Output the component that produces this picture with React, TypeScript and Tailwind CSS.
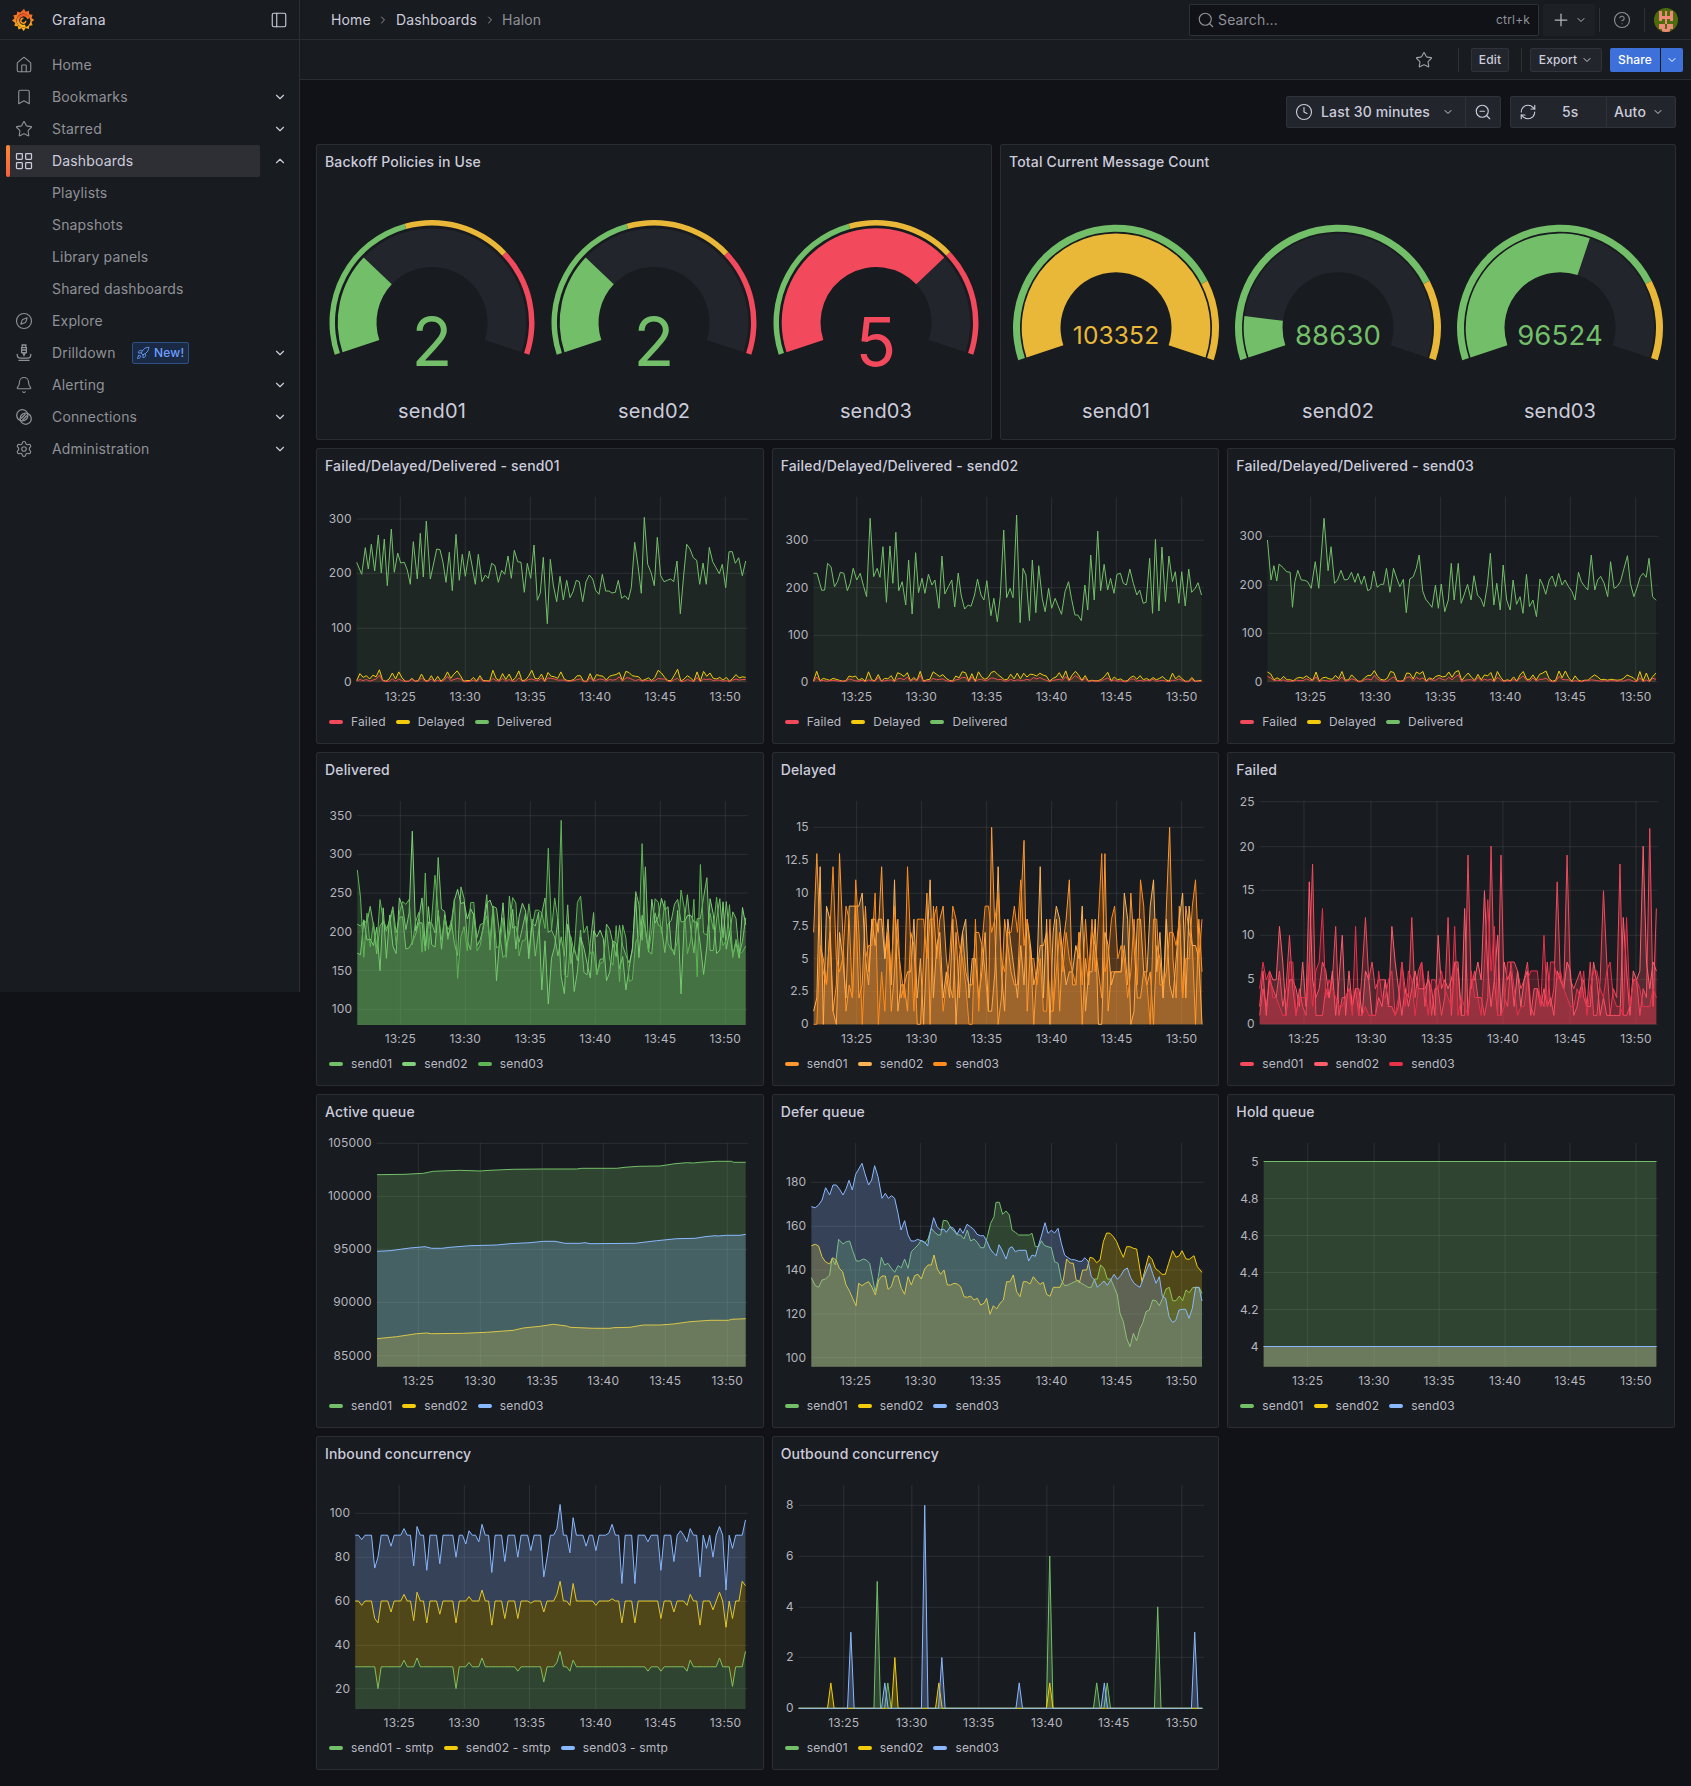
import {
  Bell,
  Bookmark,
  ChevronDown,
  ChevronRight,
  ChevronUp,
  CircleHelp,
  Clock,
  Compass,
  Home,
  LayoutGrid,
  PanelLeft,
  Plus,
  RefreshCw,
  Rocket,
  Search,
  Settings,
  Star,
  ZoomOut,
} from "lucide-react";
import type { ReactNode } from "react";

type Pt = [number, number];
type Series = { color: string; pts: Pt[]; base?: Pt[] };

const GREEN = "#73bf69";
const YELLOW = "#f2cc0c";
const RED = "#f2495c";
const BLUE = "#8ab8ff";

const rng = (start: number) => {
  let seed = start;
  return () => {
    seed = (seed + 0x6d2b79f5) | 0;
    let t = Math.imul(seed ^ (seed >>> 15), 1 | seed);
    t = (t + Math.imul(t ^ (t >>> 7), 61 | t)) ^ t;
    return ((t ^ (t >>> 14)) >>> 0) / 4294967296;
  };
};

// traced from crops of the panels: x,y pairs in crop pixels
const trace = (raw: number[], ox: number, oy: number, sx = 3, sy = 3): Pt[] => {
  const pts: Pt[] = [];
  for (let i = 0; i < raw.length; i += 2) pts.push([ox + raw[i] / sx, oy + raw[i + 1] / sy]);
  return pts;
};

const linear = (v0: number, y0: number, v1: number, y1: number) => (v: number) =>
  y0 + ((v - v0) / (v1 - v0)) * (y1 - y0);

const even = (values: number[], left: number, right: number, y: (v: number) => number): Pt[] =>
  values.map((v, i) => [left + ((right - left) * i) / (values.length - 1), y(v)]);

const noisy = (
  seed: number,
  gen: (r: () => number, i: number) => number,
  peaks: number[][],
  x0: number,
  step: number
) => {
  const r = rng(seed);
  const values = Array.from({ length: 121 }, (_, i) => gen(r, i));
  peaks.forEach(([x, v]) => {
    values[Math.min(120, Math.round((x - x0) / step))] = v;
  });
  return values;
};

const withOverrides = (base: number, overrides: number[][]) => {
  const values = Array.from({ length: 121 }, () => base);
  overrides.forEach(([i, v]) => {
    values[i] = v;
  });
  return values;
};

const XT1 = [400.3, 465.3, 530.3, 595.3, 660.3, 725.3];
const XT2 = [856.3, 921.3, 986.3, 1051.3, 1116.3, 1181.3];

const fddSmall = (seed: number, left: number, right: number, y: (v: number) => number): Series[] => {
  const r = rng(seed);
  const delayed = Array.from({ length: 121 }, () => Math.round(1 + Math.pow(r(), 1.8) * 22));
  const failed = delayed.map((v) => Math.round(v * (0.15 + r() * 0.45)));
  return [
    { color: YELLOW, pts: even(delayed, left, right, y) },
    { color: RED, pts: even(failed, left, right, y) },
  ];
};

const send01Delivered = trace(
  [140,352,155,388,166,308,175,372,184,298,194,378,205,270,214,384,223,282,232,422,244,252,253,382,263,324,272,354,283,352,292,375,301,418,310,290,322,402,331,265,340,396,349,228,361,402,370,360,380,312,390,314,399,352,408,412,418,322,427,437,438,268,448,406,457,328,466,394,478,318,487,366,496,418,505,328,516,410,526,390,535,400,545,355,555,362,565,412,575,376,584,388,594,333,604,400,613,316,623,350,633,352,643,442,652,355,662,400,672,300,682,466,691,444,700,337,712,536,721,343,730,420,740,470,750,394,760,465,770,406,780,458,789,440,799,406,808,410,818,470,828,410,838,390,848,402,857,436,867,448,877,388,887,438,897,438,906,444,916,442,925,406,935,460,945,452,955,464,964,428,974,292,984,362,994,445,1003,217,1013,358,1023,382,1033,422,1042,277,1052,392,1062,410,1072,406,1082,402,1091,410,1101,348,1111,506,1121,390,1130,298,1140,312,1150,338,1160,346,1169,418,1179,354,1189,418,1198,307,1208,350,1218,368,1228,386,1237,358,1247,428,1257,320,1267,320,1276,355,1286,338,1297,392,1307,348],
  310,
  445
);

const send02Delivered = trace(
  [74,385,80,385,88,436,93,435,98,355,104,365,110,425,115,410,120,382,126,385,132,437,137,415,142,370,148,405,154,385,160,425,165,455,171,220,177,395,183,370,188,397,193,305,199,472,205,303,210,415,215,262,220,437,226,410,232,480,237,345,243,507,249,323,254,443,260,400,265,445,271,388,277,420,282,405,289,490,294,333,299,447,305,425,311,405,316,486,322,384,327,450,333,492,339,480,344,484,350,450,355,402,361,450,366,465,371,407,378,512,383,460,389,530,394,455,400,255,405,458,411,430,416,458,422,210,428,533,433,370,438,390,444,527,449,345,455,503,460,362,466,460,471,500,477,430,482,490,488,460,493,482,499,508,505,440,511,410,516,460,522,510,527,510,533,527,539,420,544,495,549,330,555,465,561,258,566,437,572,358,578,435,583,400,589,445,594,388,600,385,605,415,610,420,616,372,622,415,628,450,633,435,639,475,644,472,650,340,655,505,660,283,666,498,671,306,677,470,683,333,689,410,694,380,700,475,705,380,711,483,717,372,722,442,728,430,733,413,739,450],
  770,
  445,
  1.7137
);

const send03Delivered = trace(
  [853,285,859,405,864,362,869,408,873,357,880,368,886,380,892,382,896,487,900,410,905,376,911,405,917,406,922,410,928,430,935,350,941,430,950,220,957,377,962,305,968,415,973,405,979,376,985,405,991,403,997,382,1003,412,1008,385,1014,418,1019,393,1025,437,1030,432,1035,378,1041,427,1047,418,1052,418,1057,370,1063,442,1069,370,1075,402,1080,425,1086,403,1091,503,1097,402,1103,395,1108,370,1113,330,1119,437,1124,462,1130,475,1135,487,1141,420,1146,490,1151,417,1157,500,1163,465,1168,355,1173,465,1180,355,1185,475,1190,450,1196,418,1202,465,1207,392,1213,450,1219,462,1224,485,1230,420,1235,325,1241,480,1246,415,1252,495,1257,360,1263,465,1269,495,1274,405,1280,478,1286,455,1291,505,1297,388,1302,485,1308,465,1314,515,1320,402,1325,420,1330,448,1336,405,1341,393,1347,425,1352,385,1358,420,1363,405,1369,425,1375,440,1380,465,1386,382,1391,410,1397,425,1402,435,1408,330,1414,435,1419,405,1424,394,1430,415,1436,455,1441,350,1447,430,1452,425,1458,410,1464,370,1470,332,1475,415,1481,455,1486,430,1492,395,1497,385,1502,397,1507,340,1513,455,1519,466],
  770,
  445,
  1.7137
);

const deferBlue = trace(
  [123,335,135,338,145,330,155,315,166,278,178,300,188,270,198,270,208,283,218,300,228,280,236,256,246,285,256,238,275,205,285,240,295,270,304,255,313,212,323,245,335,310,345,295,354,310,364,302,373,310,383,355,392,405,403,377,413,420,422,438,432,438,442,433,452,437,462,440,472,453,480,410,490,368,500,395,510,405,520,402,528,412,540,395,550,400,560,418,569,400,578,415,590,388,600,395,610,403,620,418,630,422,640,422,650,440,660,462,670,475,678,482,686,449,695,465,707,492,717,460,725,455,735,470,745,466,755,466,767,466,775,498,785,480,795,484,805,450,814,420,824,383,833,415,843,406,853,414,863,400,873,445,883,480,893,488,903,494,913,494,925,499,935,499,943,488,953,498,963,545,973,555,981,577,991,567,1001,558,1011,571,1021,555,1031,538,1041,553,1051,542,1061,525,1071,519,1081,548,1091,565,1101,572,1109,577,1119,550,1129,525,1137,505,1147,535,1157,565,1167,545,1176,604,1186,610,1196,665,1206,682,1216,677,1226,645,1236,643,1246,643,1256,670,1266,640,1276,577,1286,577,1295,618],
  770,
  1095
);

const deferGreen = trace(
  [123,548,135,572,145,577,155,555,166,552,178,540,185,490,195,510,205,433,218,447,228,440,238,438,248,470,258,498,268,498,278,492,288,495,298,505,306,545,314,590,324,545,333,487,343,510,353,505,363,520,373,532,383,512,393,518,403,492,413,520,423,470,433,460,443,450,453,435,463,445,473,432,483,400,493,412,503,420,511,420,519,376,531,378,541,398,551,408,561,420,571,420,581,432,591,405,601,438,611,432,621,442,631,458,641,458,651,425,661,385,671,365,677,322,687,322,697,358,707,348,717,360,725,405,735,412,745,420,755,420,767,420,777,420,785,415,795,455,805,455,813,437,823,452,833,455,843,458,853,500,863,505,873,555,883,572,893,570,903,565,913,560,923,555,933,565,943,570,953,577,963,577,973,552,981,552,991,510,1001,520,1011,552,1021,552,1031,575,1041,600,1049,655,1059,680,1069,730,1079,755,1089,715,1099,737,1109,700,1117,685,1127,650,1137,645,1147,615,1157,617,1167,632,1177,610,1187,582,1197,577,1207,617,1217,617,1227,603,1237,617,1247,585,1257,593,1267,578,1277,577,1287,578,1295,595],
  770,
  1095
);

const deferYellow = trace(
  [123,452,135,448,145,453,155,485,165,500,178,507,187,488,197,495,207,520,217,530,227,570,237,587,247,610,257,632,265,565,275,572,285,565,295,560,305,577,315,600,325,555,335,543,345,543,353,583,363,575,373,543,383,543,393,580,403,598,413,545,423,570,433,542,443,538,453,552,463,522,473,510,483,510,491,480,501,522,511,538,521,525,531,570,541,570,551,565,561,567,571,575,581,605,591,607,601,603,611,615,621,610,631,630,641,625,649,610,659,658,669,632,679,642,689,625,699,615,709,560,719,560,729,540,739,590,749,605,759,560,769,560,779,567,789,545,799,558,809,568,819,562,829,598,839,604,849,577,859,577,869,577,879,555,889,492,899,504,909,505,917,553,927,563,937,525,949,525,959,487,969,490,979,503,989,495,999,440,1009,414,1019,415,1029,425,1039,440,1049,465,1059,487,1069,455,1079,455,1089,460,1099,462,1115,560,1125,520,1135,482,1145,493,1155,520,1165,528,1175,538,1185,538,1195,505,1207,467,1217,487,1227,482,1235,467,1247,492,1257,493,1271,482,1281,515,1295,532],
  770,
  1095
);

const activeGreen = trace(
  [201,254,285,253,340,250,370,244,450,241,510,243,540,241,610,238,700,237,800,237,815,235,920,235,945,232,985,229,1050,228,1095,221,1130,218,1150,219,1170,217,1220,214,1265,214,1270,217,1307,217],
  310,
  1090
);
const activeBlue = trace(
  [201,484,240,482,300,474,345,470,365,475,395,475,420,472,480,467,560,465,600,461,660,458,700,454,735,454,765,460,810,460,825,458,840,461,975,460,1040,452,1100,446,1155,445,1185,440,1215,437,1225,438,1250,436,1290,436,1307,433],
  310,
  1090
);
const activeYellow = trace(
  [201,746,260,740,320,731,350,729,365,731,460,730,530,727,610,721,640,714,690,709,730,703,770,708,780,712,850,715,900,715,910,713,960,712,1000,705,1050,705,1090,702,1140,695,1200,691,1255,691,1265,688,1307,686],
  310,
  1090
);

const inboundY = linear(100, 1513.3, 20, 1688.7);
const inboundBlue = even(
  withOverrides(90, [[2,88],[6,75],[7,80],[11,85],[15,93],[18,76],[19,94],[22,74],[26,77],[31,80],[34,86],[35,92],[38,87],[39,95],[42,73],[46,78],[50,80],[54,83],[58,71],[59,80],[62,93],[63,104],[66,82],[67,98],[71,85],[74,83],[78,91],[79,95],[82,68],[86,68],[90,87],[94,74],[98,78],[100,92],[102,87],[103,93],[106,71],[108,84],[110,80],[112,94],[114,65],[116,84],[119,90],[120,97]]),
  355.2,
  745.5,
  inboundY
);
const inboundYellow = even(
  withOverrides(60, [[2,58],[6,52],[7,50],[11,55],[15,63],[18,51],[19,64],[22,50],[26,54],[31,50],[35,62],[39,65],[42,49],[46,52],[50,52],[54,59],[58,55],[62,63],[63,69],[66,58],[67,68],[74,58],[79,61],[82,50],[86,50],[94,52],[98,55],[102,58],[103,63],[106,49],[110,56],[112,64],[114,48],[116,52],[119,69],[120,67]]),
  355.2,
  745.5,
  inboundY
);
const inboundGreen = even(
  withOverrides(30, [[7,20],[15,33],[19,34],[31,20],[35,32],[39,34],[50,28],[58,23],[62,32],[63,37],[66,28],[67,33],[90,28],[92,30],[94,28],[102,28],[103,33],[112,34],[116,21],[120,37]]),
  355.2,
  745.5,
  inboundY
);

const outY = linear(8, 1505.3, 0, 1708.3);
const spikes = (list: number[][]): Pt[] => {
  const pts: Pt[] = [[798.3, outY(0)]];
  list.forEach(([zx, v]) => {
    const x = 310 + zx / 1.704;
    pts.push([x - 3.3, outY(0)], [x, outY(v)], [x + 3.3, outY(0)]);
  });
  pts.push([1202, outY(0)]);
  return pts;
};

const deliveredY = linear(350, 815.7, 100, 1009.3);
const deliveredBase = (r: () => number, i: number) => {
  const dip = i > 62 && i < 86 ? 30 : 0;
  return 205 - dip + (r() - 0.5) * 80;
};
const delayedY = linear(15, 827.3, 0, 1024.3);
const delayedBase = (r: () => number) => (r() < 0.08 ? 0 : Math.round(1 + Math.pow(r(), 1.05) * 8));
const failedY = linear(25, 801.7, 0, 1024.3);
const failedBase = (r: () => number) => Math.round(0.5 + Math.pow(r(), 1.2) * 7);

type ChartProps = {
  title: string;
  ox: number;
  oy: number;
  tall?: boolean;
  left: number;
  right: number;
  top: number;
  bottom: number;
  labelY: number;
  yTicks: [string, number][];
  xTicks: number[];
  series: Series[];
  legend: [string, string][];
  fill?: number;
};

const Panel = ({ title, children }: { title: string; children: ReactNode }) => (
  <div className="flex h-full flex-col rounded-[2px] border border-[#2a2d33] bg-[#181b1f]">
    <div className="mb-[2px] flex h-[34px] items-center px-2 text-sm font-medium text-[#ccccdc]">
      {title}
    </div>
    {children}
  </div>
);

const Chart = ({
  title,
  ox,
  oy,
  tall,
  left,
  right,
  top,
  bottom,
  labelY,
  yTicks,
  xTicks,
  series,
  legend,
  fill = 0.25,
}: ChartProps) => {
  const h = tall ? 262 : 224;
  return (
    <Panel title={title}>
      <svg
        className="block shrink-0"
        width={445}
        height={h}
        viewBox={`${ox + 1} ${oy + 37} 445 ${h}`}
      >
        {yTicks.map(([, y]) => (
          <line key={y} x1={left} x2={right} y1={y} y2={y} stroke="#fff" strokeOpacity={0.09} />
        ))}
        {xTicks.map((x) => (
          <line key={x} x1={x} x2={x} y1={top} y2={bottom} stroke="#fff" strokeOpacity={0.09} />
        ))}
        {series.map((s, i) => {
          const fmt = (p: Pt) => `${p[0].toFixed(1)},${p[1].toFixed(1)}`;
          const line = s.pts.map(fmt).join(" ");
          const first = s.pts[0][0].toFixed(1);
          const last = s.pts[s.pts.length - 1][0].toFixed(1);
          const floor = s.base
            ? [...s.base].reverse().map(fmt).join(" ")
            : `${last},${bottom} ${first},${bottom}`;
          return (
            <g key={i}>
              <polygon points={`${line} ${floor}`} fill={s.color} fillOpacity={fill} />
              <polyline points={line} fill="none" stroke={s.color} strokeWidth={1} />
            </g>
          );
        })}
        {yTicks.map(([label, y]) => (
          <text key={label} x={left - 5} y={y + 4} textAnchor="end" fontSize={12} fill="#b4b5be">
            {label}
          </text>
        ))}
        {["13:25", "13:30", "13:35", "13:40", "13:45", "13:50"].map((label, i) => (
          <text key={label} x={xTicks[i]} y={labelY} textAnchor="middle" fontSize={12} fill="#b4b5be">
            {label}
          </text>
        ))}
      </svg>
      <div className="mt-[2px] flex h-[22px] items-center gap-[10px] pl-3 text-xs text-[#b9bac3]">
        {legend.map(([name, color]) => (
          <div key={name} className="flex items-center gap-2">
            <span className="h-1 w-[14px] rounded-full" style={{ backgroundColor: color }} />
            {name}
          </div>
        ))}
      </div>
    </Panel>
  );
};

const polar = (cx: number, cy: number, r: number, deg: number): string => {
  const a = (deg * Math.PI) / 180;
  return `${(cx + r * Math.cos(a)).toFixed(2)} ${(cy - r * Math.sin(a)).toFixed(2)}`;
};

const START = 198.4;
const SWEEP = 216.8;

const sector = (cy: number, r0: number, r1: number, f0: number, f1: number) => {
  const a0 = START - SWEEP * f0;
  const a1 = START - SWEEP * f1;
  const large = a0 - a1 > 180 ? 1 : 0;
  return `M${polar(111, cy, r1, a0)} A${r1} ${r1} 0 ${large} 1 ${polar(111, cy, r1, a1)} L${polar(111, cy, r0, a1)} A${r0} ${r0} 0 ${large} 0 ${polar(111, cy, r0, a0)} Z`;
};

type GaugeProps = {
  label: string;
  value: string;
  fraction: number;
  color: string;
  cy: number;
  ring: [number, number];
  steps: [number, number, string][];
  fontSize: number;
  valueY: number;
};

const Gauge = ({ label, value, fraction, color, cy, ring, steps, fontSize, valueY }: GaugeProps) => (
  <svg className="block" width={222} height={255} viewBox="0 0 222 255">
    {steps.map(([a, b, c]) => (
      <path key={c} d={sector(cy, ring[0], ring[1], a, b)} fill={c} />
    ))}
    <path d={sector(cy, 55.5, 94.3, 0, 1)} fill="#22252b" />
    <path d={sector(cy, 55.5, 94.3, 0, fraction)} fill={color} />
    <text x={111} y={valueY} textAnchor="middle" fontSize={fontSize} fill={color}>
      {value}
    </text>
    <text x={111} y={237} textAnchor="middle" fontSize={20} fill="#ccccdc">
      {label}
    </text>
  </svg>
);

const policySteps: [number, number, string][] = [
  [0, 3 / 7, GREEN],
  [3 / 7, 5 / 7, "#eab839"],
  [5 / 7, 1, RED],
];
const countSteps: [number, number, string][] = [
  [0, 0.79, GREEN],
  [0.79, 1, "#eab839"],
];

const Logo = () => (
  <svg width={24} height={24} viewBox="0 0 24 24">
    <defs>
      <linearGradient id="logo" x1="0" y1="1" x2="0" y2="0">
        <stop offset="0" stopColor="#fcb91f" />
        <stop offset="1" stopColor="#f0572a" />
      </linearGradient>
    </defs>
    <path
      d="M13 .8l1.7 3 3.2-1 .3 3.4 3.4.6-1.1 3.2 2.7 2-2.6 2.1 1 3.2-3.3.5-.5 3.3-3.2-1-1.9 2.8-2.2-2.6-3.1 1.3-.6-3.3-3.4-.2.9-3.2L1 12.6l2.5-2.2-1.1-3.2 3.3-.4.5-3.3 3.1 1.1z"
      fill="url(#logo)"
    />
    <circle cx="12.4" cy="12.6" r="7" fill="#181b1f" />
    <path
      d="M17.6 10.6a5.5 5.5 0 1 0-3.2 7.1"
      fill="none"
      stroke="url(#logo)"
      strokeWidth="2.6"
    />
    <path d="M14.8 12.8a2.5 2.5 0 1 1-2.4-2.6" fill="none" stroke="#fb9a22" strokeWidth="1.4" />
  </svg>
);

const DrilldownIcon = () => (
  <svg width={16} height={18} viewBox="0 0 16 18" fill="none" stroke="currentColor" strokeWidth="1.3">
    <path d="M6.2 1h3.6v2.6H6.2zM5.6 3.6h4.8v5H5.6zM5.6 6h4.8M6.6 8.6L8 11.4l1.4-2.8" />
    <path d="M1.2 10.5c0 2.4 1 3.6 3.2 3.6h7.2c2.2 0 3.2-1.2 3.2-3.6M3 16.4h10" strokeLinecap="round" />
  </svg>
);

const ConnectionsIcon = () => (
  <svg width={16} height={16} viewBox="0 0 16 16" fill="none" stroke="currentColor" strokeWidth="1.3">
    <circle cx="6.3" cy="6.3" r="5.6" />
    <circle cx="9.7" cy="9.7" r="5.6" />
    <path d="M5 9.5L9.5 5M6.5 11L11 6.5" />
  </svg>
);

const Avatar = () => {
  const rows = [
    "..XX.XX..",
    ".XOXOXOX.",
    "XXOXOXOXX",
    "XXOOOOOXX",
    "XXOXOXOXX",
    "XXXXOXXXX",
    "XXOOXOOXX",
    ".XOOXOOX.",
    "..XOOOX..",
  ];
  return (
    <svg width={24} height={24} viewBox="0 0 9 9" shapeRendering="crispEdges" className="rounded-full">
      <rect width="9" height="9" fill="#4f6c0c" />
      {rows.flatMap((row, y) =>
        row
          .split("")
          .map((c, x) =>
            c === "O" ? <rect key={`${x}-${y}`} x={x} y={y} width="1" height="1" fill="#ee8a78" /> : null
          )
      )}
    </svg>
  );
};

const NavRow = ({
  icon,
  label,
  chevron,
  active,
  badge,
}: {
  icon?: ReactNode;
  label: string;
  chevron?: boolean;
  active?: boolean;
  badge?: boolean;
}) => (
  <div className="flex h-8 items-center pl-[6px]">
    <div
      className={
        active
          ? "relative flex h-8 w-[254px] items-center rounded-[2px] bg-[#2d2f34] text-[#ccccdc]"
          : "relative flex h-8 w-[254px] items-center text-[#8f9198]"
      }
    >
      {active && (
        <span className="absolute inset-y-0 left-0 w-1 rounded-[2px] bg-linear-to-b from-[#ff8833] to-[#f55f3e]" />
      )}
      <span className="mr-[10px] flex w-[36px] justify-center">{icon}</span>
      <span className="text-sm">{label}</span>
      {badge && (
        <span className="ml-[16px] flex h-[22px] w-[57px] items-center justify-center gap-1 rounded-[2px] border border-[#2f5286] bg-[#1a2a44] text-xs font-medium text-[#6e9fff]">
          <Rocket size={14} strokeWidth={1.5} />
          New!
        </span>
      )}
    </div>
    {chevron && (
      <span className="ml-[13px] text-[#ccccdc]">
        {active ? <ChevronUp size={14} /> : <ChevronDown size={14} />}
      </span>
    )}
  </div>
);

const Sidebar = () => (
  <aside className="h-[992px] w-[300px] shrink-0 border-r border-[#2a2d33] bg-[#181b1f]">
    <div className="flex h-10 items-center border-b border-[#2a2d33] pr-[11px] pl-[11px]">
      <Logo />
      <span className="ml-[17px] text-sm text-[#ccccdc]">Grafana</span>
      <PanelLeft size={18} strokeWidth={1.5} className="ml-auto text-[#ccccdc]" />
    </div>
    <nav className="pt-[9px]">
      <NavRow icon={<Home size={18} strokeWidth={1.5} />} label="Home" />
      <NavRow icon={<Bookmark size={18} strokeWidth={1.5} />} label="Bookmarks" chevron />
      <NavRow icon={<Star size={18} strokeWidth={1.5} />} label="Starred" chevron />
      <NavRow icon={<LayoutGrid size={20} strokeWidth={1.5} />} label="Dashboards" chevron active />
      <NavRow label="Playlists" />
      <NavRow label="Snapshots" />
      <NavRow label="Library panels" />
      <NavRow label="Shared dashboards" />
      <NavRow icon={<Compass size={18} strokeWidth={1.5} />} label="Explore" />
      <NavRow icon={<DrilldownIcon />} label="Drilldown" chevron badge />
      <NavRow icon={<Bell size={18} strokeWidth={1.5} />} label="Alerting" chevron />
      <NavRow icon={<ConnectionsIcon />} label="Connections" chevron />
      <NavRow icon={<Settings size={18} strokeWidth={1.5} />} label="Administration" chevron />
    </nav>
  </aside>
);

const TopBar = () => (
  <header className="flex h-10 items-center border-b border-[#2a2d33] bg-[#181b1f] pr-[13px] pl-[31px] text-sm">
    <span className="text-[#ccccdc]">Home</span>
    <ChevronRight size={12} className="mx-[6.5px] text-[#8f9198]" />
    <span className="text-[#ccccdc]">Dashboards</span>
    <ChevronRight size={12} className="mx-[6.5px] text-[#8f9198]" />
    <span className="text-[#8f9198]">Halon</span>
    <div className="ml-auto flex h-[32px] w-[350px] items-center rounded-[2px] border border-[#2f3238] bg-[#111217] pr-2 pl-[7px] text-[#8f9198]">
      <Search size={18} strokeWidth={1.5} />
      <span className="ml-[3px]">Search...</span>
      <span className="ml-auto text-xs">ctrl+k</span>
    </div>
    <div className="ml-1 flex h-[32px] w-[52px] items-center justify-center gap-1 rounded-[2px] bg-[#1d2025] text-[#b4b5be]">
      <Plus size={20} strokeWidth={1.5} />
      <ChevronDown size={12} />
    </div>
    <span className="ml-1 h-6 w-px bg-[#2f3238]" />
    <CircleHelp size={18} strokeWidth={1.5} className="mx-[13px] text-[#8f9198]" />
    <span className="h-6 w-px bg-[#2f3238]" />
    <span className="ml-[9px] flex">
      <Avatar />
    </span>
  </header>
);

const toolBtn =
  "flex h-6 items-center justify-center rounded-[2px] border border-[#2f3238] bg-[#22252b] text-xs font-medium text-[#ccccdc]";

const ToolBar = () => (
  <div className="flex h-10 items-center justify-end border-b border-[#2a2d33] bg-[#181b1f] pr-2">
    <Star size={18} strokeWidth={1.5} className="text-[#a0a1a9]" />
    <span className="mr-3 ml-[25px] h-6 w-px bg-[#2f3238]" />
    <div className={`${toolBtn} w-[38px]`}>Edit</div>
    <span className="mr-2 ml-3 h-6 w-px bg-[#2f3238]" />
    <div className={`${toolBtn} w-[72px] gap-1`}>
      Export
      <ChevronDown size={12} />
    </div>
    <div className="ml-2 flex h-6 w-[50px] items-center justify-center rounded-l-[2px] bg-[#3d71d9] text-xs font-medium text-white">
      Share
    </div>
    <div className="ml-px flex h-6 w-[22px] items-center justify-center rounded-r-[2px] bg-[#3d71d9] text-white">
      <ChevronDown size={12} />
    </div>
  </div>
);

const timeBtn =
  "flex h-8 items-center border border-[#2f3238] bg-[#22252b] text-sm font-medium text-[#ccccdc]";

const TimeControls = () => (
  <div className="mb-4 flex h-8 justify-end">
    <div className={`${timeBtn} w-[180px] rounded-l-[2px] pl-[8px]`}>
      <Clock size={18} strokeWidth={1.5} />
      <span className="ml-[8px]">Last 30 minutes</span>
      <ChevronDown size={12} className="mr-[11px] ml-auto" />
    </div>
    <div className={`${timeBtn} -ml-px w-[36px] justify-center rounded-r-[2px]`}>
      <ZoomOut size={18} strokeWidth={1.5} />
    </div>
    <div className={`${timeBtn} ml-[9px] w-[97px] rounded-l-[2px] pl-[8px]`}>
      <RefreshCw size={18} strokeWidth={1.5} />
      <span className="ml-[25px]">5s</span>
    </div>
    <div className={`${timeBtn} -ml-px w-[70px] justify-center gap-[6px] rounded-r-[2px] pr-1`}>
      Auto
      <ChevronDown size={12} />
    </div>
  </div>
);

const fddLegend: [string, string][] = [
  ["Failed", RED],
  ["Delayed", YELLOW],
  ["Delivered", GREEN],
];
const hostLegend: [string, string][] = [
  ["send01", GREEN],
  ["send02", YELLOW],
  ["send03", BLUE],
];

const App = () => {
  const y1 = linear(300, 519, 0, 681.7);
  const y2 = linear(300, 540.3, 0, 681.7);
  const y3 = linear(300, 536.3, 0, 681.7);

  const delivered = [
    noisy(11, deliveredBase, [[142,210],[243,216],[331,212],[388,296],[448,258],[526,248],[594,246],[691,224],[770,235],[847,225],[974,252],[1003,284],[1130,248],[1189,270]], 142, 9.7),
    noisy(23, deliveredBase, [[214,150],[310,330],[438,255],[557,137],[691,125],[712,107],[760,120],[790,123],[946,125],[1111,120],[1180,145]], 142, 9.7),
    noisy(37, deliveredBase, [[142,280],[349,276],[370,273],[439,140],[672,228],[712,308],[751,344],[799,238],[808,246],[915,208],[994,314],[1042,238],[1111,254],[1149,242],[1167,287],[1218,245],[1160,142]], 142, 9.7),
  ];
  const delayed = [
    noisy(5, delayedBase, [[142,13],[211,13],[337,12],[466,10],[661,15],[766,14],[895,11],[1000,13],[1078,10],[1195,15],[1295,4]], 130, 9.71),
    noisy(6, delayedBase, [[154,12],[271,10],[376,11],[484,11],[688,12],[805,12],[1060,10],[1147,11],[1234,10]], 130, 9.71),
    noisy(7, delayedBase, [[193,12],[259,11],[319,10],[415,12],[679,10],[748,11],[991,13],[1108,11],[1273,11]], 130, 9.71),
  ];
  const failed = [
    noisy(8, failedBase, [[190,10],[268,18],[337,11],[418,12],[556,12],[667,12],[727,19],[796,20],[826,19],[994,16],[1024,19],[1135,15],[1183,18],[1273,22],[1294,13]], 105, 9.9),
    noisy(9, failedBase, [[169,11],[250,16],[357,10],[499,11],[637,10],[718,13],[775,15],[817,10],[1195,12],[1255,20]], 105, 9.9),
    noisy(10, failedBase, [[289,13],[388,11],[688,11],[787,14],[805,11],[955,10],[1204,12]], 105, 9.9),
  ];

  return (
    <div className="flex min-h-[1786px] bg-[#111217] font-[family-name:Inter,sans-serif] tracking-[0.01em] text-[#ccccdc]">
      <Sidebar />
      <div className="min-w-0 flex-1">
        <TopBar />
        <ToolBar />
        <main className="pt-4 pr-[15px] pl-4">
          <TimeControls />
          <div className="flex flex-col gap-y-[8.5px]">
            <div className="grid h-[295.5px] grid-cols-2 gap-x-2">
              <Panel title="Backoff Policies in Use">
                <div className="grid grid-cols-3 px-1">
                  <Gauge label="send01" value="2" fraction={2 / 7} color={GREEN} cy={141.5} ring={[97, 102.5]} steps={policySteps} fontSize={67} valueY={184.7} />
                  <Gauge label="send02" value="2" fraction={2 / 7} color={GREEN} cy={141.5} ring={[97, 102.5]} steps={policySteps} fontSize={67} valueY={184.7} />
                  <Gauge label="send03" value="5" fraction={5 / 7} color={RED} cy={141.5} ring={[97, 102.5]} steps={policySteps} fontSize={67} valueY={184.7} />
                </div>
              </Panel>
              <Panel title="Total Current Message Count">
                <div className="grid grid-cols-3 px-1">
                  <Gauge label="send01" value="103352" fraction={1} color="#eab839" cy={146.7} ring={[96, 103]} steps={countSteps} fontSize={24.5} valueY={163} />
                  <Gauge label="send02" value="88630" fraction={0.1176} color={GREEN} cy={146.7} ring={[96, 103]} steps={countSteps} fontSize={27.5} valueY={164} />
                  <Gauge label="send03" value="96524" fraction={0.585} color={GREEN} cy={146.7} ring={[96, 103]} steps={countSteps} fontSize={27.5} valueY={164} />
                </div>
              </Panel>
            </div>

            <div className="mr-px grid h-[295.5px] grid-cols-3 gap-x-2">
              <Chart
                title="Failed/Delayed/Delivered - send01"
                ox={316}
                oy={448}
                left={356.7}
                right={747.7}
                top={496.7}
                bottom={681.7}
                labelY={701}
                yTicks={[["300", 519], ["200", 573.3], ["100", 628.3], ["0", 681.7]]}
                xTicks={XT1}
                fill={0.08}
                legend={fddLegend}
                series={[{ color: GREEN, pts: send01Delivered }, ...fddSmall(101, 356.7, 745.7, y1)]}
              />
              <Chart
                title="Failed/Delayed/Delivered - send02"
                ox={771.67}
                oy={448}
                left={813.2}
                right={1203.6}
                top={496.7}
                bottom={681.7}
                labelY={701}
                yTicks={[["300", 540.3], ["200", 587.7], ["100", 635.3], ["0", 681.7]]}
                xTicks={[856.4, 921, 986.5, 1051.3, 1116, 1181.4]}
                fill={0.08}
                legend={fddLegend}
                series={[{ color: GREEN, pts: send02Delivered }, ...fddSmall(202, 813.2, 1201.2, y2)]}
              />
              <Chart
                title="Failed/Delayed/Delivered - send03"
                ox={1227.33}
                oy={448}
                left={1267.8}
                right={1658.7}
                top={496.7}
                bottom={681.7}
                labelY={701}
                yTicks={[["300", 536.3], ["200", 585.3], ["100", 633.3], ["0", 681.7]]}
                xTicks={[1311, 1375.7, 1441, 1505.8, 1570.6, 1636]}
                fill={0.08}
                legend={fddLegend}
                series={[{ color: GREEN, pts: send03Delivered }, ...fddSmall(303, 1267.8, 1656.4, y3)]}
              />
            </div>

            <div className="mr-px grid h-[333.5px] grid-cols-3 gap-x-2">
              <Chart
                title="Delivered"
                tall
                ox={316}
                oy={752}
                left={357.3}
                right={747.7}
                top={801}
                bottom={1025}
                labelY={1043}
                fill={0.22}
                yTicks={[["350", 815.7], ["300", 854.4], ["250", 893.1], ["200", 931.8], ["150", 970.6], ["100", 1009.3]]}
                xTicks={XT1}
                legend={[["send01", GREEN], ["send02", "#7ed178"], ["send03", "#5fb455"]]}
                series={[
                  { color: GREEN, pts: even(delivered[0], 357.3, 745.7, deliveredY) },
                  { color: "#7ed178", pts: even(delivered[1], 357.3, 745.7, deliveredY) },
                  { color: "#5fb455", pts: even(delivered[2], 357.3, 745.7, deliveredY) },
                ]}
              />
              <Chart
                title="Delayed"
                tall
                ox={771.67}
                oy={752}
                left={813.3}
                right={1203.3}
                top={801}
                bottom={1024.3}
                labelY={1043}
                yTicks={[["15", 827.3], ["12.5", 860.3], ["10", 893.3], ["7.5", 926.3], ["5", 958.7], ["2.5", 991.3], ["0", 1024.3]]}
                xTicks={XT2}
                legend={[["send01", "#ff9830"], ["send02", "#ffb357"], ["send03", "#ff8c1a"]]}
                series={[
                  { color: "#ff9830", pts: even(delayed[0], 813.3, 1201.7, delayedY) },
                  { color: "#ffb357", pts: even(delayed[1], 813.3, 1201.7, delayedY) },
                  { color: "#ff8c1a", pts: even(delayed[2], 813.3, 1201.7, delayedY) },
                ]}
              />
              <Chart
                title="Failed"
                tall
                ox={1227.33}
                oy={752}
                left={1260}
                right={1658.3}
                top={801}
                bottom={1024.3}
                labelY={1043}
                yTicks={[["25", 801.7], ["20", 846.7], ["15", 890.3], ["10", 935.3], ["5", 979.3], ["0", 1024.3]]}
                xTicks={[1304.3, 1371.3, 1437.3, 1503.3, 1570.3, 1636.3]}
                legend={[["send01", RED], ["send02", "#ff5c6c"], ["send03", "#e8304a"]]}
                series={[
                  { color: RED, pts: even(failed[0], 1260, 1656.7, failedY) },
                  { color: "#ff5c6c", pts: even(failed[1], 1260, 1656.7, failedY) },
                  { color: "#e8304a", pts: even(failed[2], 1260, 1656.7, failedY) },
                ]}
              />
            </div>

            <div className="mr-px grid h-[333.5px] grid-cols-3 gap-x-2">
              <Chart
                title="Active queue"
                tall
                ox={316}
                oy={1094}
                left={376.7}
                right={747.7}
                top={1143.3}
                bottom={1366.7}
                labelY={1385}
                yTicks={[["105000", 1143.3], ["100000", 1196.3], ["95000", 1249.3], ["90000", 1302.3], ["85000", 1355.7]]}
                xTicks={[418.3, 480.3, 542.3, 603.3, 665.3, 727.3]}
                legend={hostLegend}
                series={[
                  { color: GREEN, pts: activeGreen },
                  { color: YELLOW, pts: activeYellow },
                  { color: BLUE, pts: activeBlue },
                ]}
              />
              <Chart
                title="Defer queue"
                tall
                ox={771.67}
                oy={1094}
                left={811}
                right={1203.3}
                top={1143}
                bottom={1366.7}
                labelY={1385}
                yTicks={[["180", 1182.3], ["160", 1226.3], ["140", 1270], ["120", 1314], ["100", 1357.7]]}
                xTicks={[855.3, 920.3, 985.3, 1051.3, 1116.3, 1181.3]}
                legend={hostLegend}
                series={[
                  { color: GREEN, pts: deferGreen },
                  { color: YELLOW, pts: deferYellow },
                  { color: BLUE, pts: deferBlue },
                ]}
              />
              <Chart
                title="Hold queue"
                tall
                ox={1227.33}
                oy={1094}
                left={1264}
                right={1658.3}
                top={1143}
                bottom={1366.7}
                labelY={1385}
                yTicks={[["5", 1161.5], ["4.8", 1198.5], ["4.6", 1235.5], ["4.4", 1272.5], ["4.2", 1309.5], ["4", 1346.5]]}
                xTicks={[1308, 1374.4, 1439.4, 1505.4, 1570.3, 1636.3]}
                legend={hostLegend}
                series={[
                  { color: GREEN, pts: [[1264, 1161.5], [1656.7, 1161.5]] },
                  { color: YELLOW, pts: [[1264, 1346.5], [1656.7, 1346.5]] },
                  { color: BLUE, pts: [[1264, 1346.5], [1656.7, 1346.5]] },
                ]}
              />
            </div>

            <div className="mr-px grid h-[333.5px] grid-cols-3 gap-x-2">
              <Chart
                title="Inbound concurrency"
                tall
                ox={316}
                oy={1436}
                left={355.2}
                right={747.8}
                top={1485}
                bottom={1709}
                labelY={1727}
                yTicks={[["100", 1513.3], ["80", 1557.3], ["60", 1601.3], ["40", 1645.3], ["20", 1688.7]]}
                xTicks={[399.2, 464.3, 529.5, 595.8, 660.4, 725.5]}
                legend={[["send01 - smtp", GREEN], ["send02 - smtp", YELLOW], ["send03 - smtp", BLUE]]}
                series={[
                  { color: GREEN, pts: inboundGreen },
                  { color: YELLOW, pts: inboundYellow, base: inboundGreen },
                  { color: BLUE, pts: inboundBlue, base: inboundYellow },
                ]}
              />
              <Chart
                title="Outbound concurrency"
                tall
                ox={771.67}
                oy={1436}
                left={798.3}
                right={1203.8}
                top={1485}
                bottom={1708.3}
                labelY={1727}
                yTicks={[["8", 1505.3], ["6", 1556.3], ["4", 1607.3], ["2", 1657.3], ["0", 1708.3]]}
                xTicks={[843.4, 911.5, 978.4, 1046.5, 1113.4, 1181.5]}
                legend={hostLegend}
                series={[
                  { color: GREEN, pts: spikes([[966,5],[984,1],[1260,6],[1340,1],[1358,1],[1444,4]]) },
                  { color: YELLOW, pts: spikes([[887,1],[996,2],[1071,1],[1260,1]]) },
                  { color: BLUE, pts: spikes([[921,3],[979,1],[1047,8],[1076,2],[1208,1],[1353,1],[1507,3]]) },
                ]}
              />
            </div>
          </div>
        </main>
      </div>
    </div>
  );
};

export default App;
